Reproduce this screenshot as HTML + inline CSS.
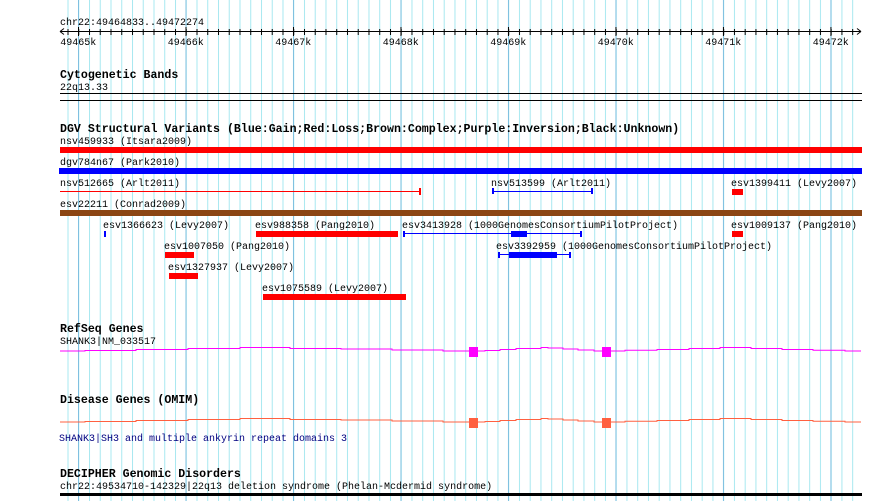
<!DOCTYPE html>
<html><head><meta charset="utf-8"><style>
html,body{margin:0;padding:0;background:#fff;}
svg{display:block;}
text{font-family:"Liberation Mono","DejaVu Sans Mono",monospace;font-size:10px;fill:#000;}
.b{font-weight:bold;font-size:11.6px;}
</style></head><body>
<svg width="890" height="501" viewBox="0 0 890 501" xmlns="http://www.w3.org/2000/svg">
<defs>
<pattern id="mn" patternUnits="userSpaceOnUse" x="67.5" y="0" width="10.749" height="501"><rect x="0" y="0" width="1" height="501" fill="#a8e8f0"/></pattern>
<pattern id="mj" patternUnits="userSpaceOnUse" x="78" y="0" width="107.49" height="501"><rect x="0" y="0" width="1" height="501" fill="#7fc0e0"/></pattern>
<pattern id="tk" patternUnits="userSpaceOnUse" x="67.5" y="0" width="10.749" height="501"><rect x="0" y="0" width="1" height="501" fill="#000"/></pattern>
<pattern id="tkm" patternUnits="userSpaceOnUse" x="78" y="0" width="107.49" height="501"><rect x="0" y="0" width="1" height="501" fill="#000"/></pattern>
</defs>
<rect x="67" y="0" width="787" height="501" fill="url(#mn)"/>
<rect x="77" y="0" width="777" height="501" fill="url(#mj)"/>

<text x="60" y="25">chr22:49464833..49472274</text>
<line x1="60" y1="31.5" x2="861" y2="31.5" stroke="#000"/>
<path d="M60 31.5 L64 28.5 M60 31.5 L64 34.5 M861 31.5 L857 28.5 M861 31.5 L857 34.5" stroke="#000" fill="none"/>
<rect x="67" y="29" width="787" height="6" fill="url(#tk)"/>
<rect x="77" y="27" width="777" height="9" fill="url(#tkm)"/>
<text x="78.3" y="45" text-anchor="middle">49465k</text>
<text x="185.8" y="45" text-anchor="middle">49466k</text>
<text x="293.3" y="45" text-anchor="middle">49467k</text>
<text x="400.8" y="45" text-anchor="middle">49468k</text>
<text x="508.3" y="45" text-anchor="middle">49469k</text>
<text x="615.8" y="45" text-anchor="middle">49470k</text>
<text x="723.2" y="45" text-anchor="middle">49471k</text>
<text x="830.7" y="45" text-anchor="middle">49472k</text>

<text class="b" x="60" y="78">Cytogenetic Bands</text>
<text x="60" y="90">22q13.33</text>
<rect x="60" y="93" width="802" height="1" fill="#000"/>
<rect x="60" y="100" width="802" height="1" fill="#000"/>

<text class="b" x="60" y="132">DGV Structural Variants (Blue:Gain;Red:Loss;Brown:Complex;Purple:Inversion;Black:Unknown)</text>
<text x="60" y="144">nsv459933 (Itsara2009)</text>
<rect x="60" y="147" width="802" height="6" fill="#f00"/>
<text x="60" y="165">dgv784n67 (Park2010)</text>
<rect x="59" y="168" width="803" height="6" fill="#00f"/>
<text x="60" y="186">nsv512665 (Arlt2011)</text>
<rect x="60" y="191" width="360" height="1" fill="#f00"/>
<rect x="419" y="188" width="2" height="7" fill="#f00"/>
<text x="491" y="186">nsv513599 (Arlt2011)</text>
<rect x="493" y="191" width="99" height="1" fill="#00f"/>
<rect x="492" y="188" width="2" height="6" fill="#00f"/>
<rect x="591" y="188" width="2" height="6" fill="#00f"/>
<text x="731" y="186">esv1399411 (Levy2007)</text>
<rect x="732" y="189" width="11" height="6" fill="#f00"/>
<text x="60" y="207">esv22211 (Conrad2009)</text>
<rect x="60" y="210" width="802" height="6" fill="#8b4513"/>

<text x="103" y="228">esv1366623 (Levy2007)</text>
<rect x="104" y="231" width="2" height="6" fill="#00f"/>
<text x="255" y="228">esv988358 (Pang2010)</text>
<rect x="256" y="231" width="142" height="6" fill="#f00"/>
<text x="402" y="228">esv3413928 (1000GenomesConsortiumPilotProject)</text>
<rect x="403" y="233" width="178" height="1" fill="#00f"/>
<rect x="403" y="231" width="2" height="6" fill="#00f"/>
<rect x="580" y="231" width="2" height="6" fill="#00f"/>
<rect x="511" y="231" width="16" height="6" fill="#00f"/>
<text x="731" y="228">esv1009137 (Pang2010)</text>
<rect x="732" y="231" width="11" height="6" fill="#f00"/>

<text x="164" y="249">esv1007050 (Pang2010)</text>
<rect x="165" y="252" width="29" height="6" fill="#f00"/>
<text x="496" y="249">esv3392959 (1000GenomesConsortiumPilotProject)</text>
<rect x="498" y="254" width="72" height="1" fill="#00f"/>
<rect x="498" y="252" width="2" height="6" fill="#00f"/>
<rect x="569" y="252" width="2" height="6" fill="#00f"/>
<rect x="509" y="252" width="48" height="6" fill="#00f"/>
<text x="168" y="270">esv1327937 (Levy2007)</text>
<rect x="169" y="273" width="29" height="6" fill="#f00"/>
<text x="262" y="291">esv1075589 (Levy2007)</text>
<rect x="263" y="294" width="143" height="6" fill="#f00"/>

<text class="b" x="60" y="332">RefSeq Genes</text>
<text x="60" y="344">SHANK3|NM_033517</text>
<path fill="none" stroke="#f0f" stroke-width="1" d="M60 351H85V350.5H136V349.5H188V348.5H240V347.5H290V348.5H341V349H392V350H443V351H485V350.5H500V349.5H516V348.5H541V347.5H548V348H563V349H578V350H594V351H625V350.3H657V349.5H689V348.5H720V347.5H751V348.5H782V349.5H813V350.3H845V351H861"/>
<rect x="469" y="347" width="9" height="10" fill="#f0f"/>
<rect x="602" y="347" width="9" height="10" fill="#f0f"/>

<text class="b" x="60" y="403">Disease Genes (OMIM)</text>
<path fill="none" stroke="#ff6040" stroke-width="1" transform="translate(0,71)" d="M60 351H85V350.5H136V349.5H188V348.5H240V347.5H290V348.5H341V349H392V350H443V351H485V350.5H500V349.5H516V348.5H541V347.5H548V348H563V349H578V350H594V351H625V350.3H657V349.5H689V348.5H720V347.5H751V348.5H782V349.5H813V350.3H845V351H861"/>
<rect x="469" y="418" width="9" height="10" fill="#ff6040"/>
<rect x="602" y="418" width="9" height="10" fill="#ff6040"/>
<text x="59" y="441" style="fill:#000080">SHANK3|SH3 and multiple ankyrin repeat domains 3</text>

<text class="b" x="60" y="477">DECIPHER Genomic Disorders</text>
<text x="60" y="489">chr22:49534710-142329|22q13 deletion syndrome (Phelan-Mcdermid syndrome)</text>
<rect x="60" y="493" width="802" height="3" fill="#000"/>
</svg>
</body></html>
